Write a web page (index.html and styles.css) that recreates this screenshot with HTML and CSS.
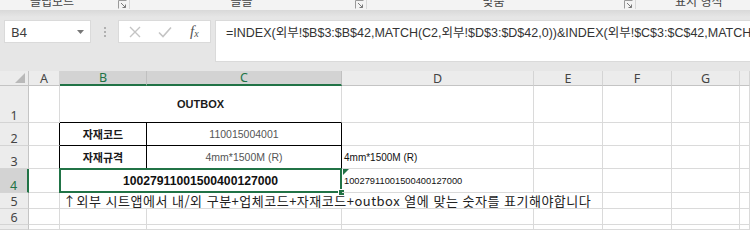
FILE: index.html
```html
<!DOCTYPE html>
<html lang="ko">
<head>
<meta charset="utf-8">
<title>OUTBOX</title>
<link rel="stylesheet" href="styles.css">
</head>
<body>
<div class="ribbon">
  <div class="grp g-clip"><span class="glabel">클립보드</span><span class="launch"><svg width="9" height="9" viewBox="0 0 9 9"><path d="M0.5 8.5V0.5H8.5" fill="none" stroke="#9a9a9a"/><path d="M3 3L7.5 7.5M4.5 7.5H7.5V4.5" fill="none" stroke="#7a7a7a"/></svg></span></div>
  <div class="grp g-font"><span class="glabel">글꼴</span><span class="launch"><svg width="9" height="9" viewBox="0 0 9 9"><path d="M0.5 8.5V0.5H8.5" fill="none" stroke="#9a9a9a"/><path d="M3 3L7.5 7.5M4.5 7.5H7.5V4.5" fill="none" stroke="#7a7a7a"/></svg></span></div>
  <div class="grp g-align"><span class="glabel">맞춤</span><span class="launch"><svg width="9" height="9" viewBox="0 0 9 9"><path d="M0.5 8.5V0.5H8.5" fill="none" stroke="#9a9a9a"/><path d="M3 3L7.5 7.5M4.5 7.5H7.5V4.5" fill="none" stroke="#7a7a7a"/></svg></span></div>
  <div class="grp g-num"><span class="glabel">표시 형식</span></div>
</div>
<div class="fbar">
  <div class="namebox"><span class="nb-text">B4</span><svg class="caret" width="7" height="4" viewBox="0 0 7 4"><path d="M0 0H7L3.5 4Z" fill="#777"/></svg></div>
  <div class="dots"><i></i><i></i><i></i></div>
  <div class="fxbox">
    <svg width="12" height="12" viewBox="0 0 12 12"><path d="M1 1L11 11M11 1L1 11" stroke="#c4c4c4" stroke-width="1.4" fill="none"/></svg>
    <svg width="14" height="12" viewBox="0 0 14 12"><path d="M1 6.5L5 10.5L13 1.5" stroke="#c4c4c4" stroke-width="1.6" fill="none"/></svg>
    <span class="fx">f<sub>x</sub></span>
  </div>
  <div class="formula">=INDEX(외부!$B$3:$B$42,MATCH(C2,외부!$D$3:$D$42,0))&amp;INDEX(외부!$C$3:$C$42,MATCH(C3,외부!$E$3:$E$42,0))</div>
</div>
<div class="sheet">
  <!-- header row -->
  <div class="corner"><svg width="10" height="10" viewBox="0 0 10 10"><path d="M10 0V10H0Z" fill="#b9b9b9"/></svg></div>
  <div class="ch">A</div>
  <div class="ch sel-h">B</div>
  <div class="ch sel-h">C</div>
  <div class="ch">D</div>
  <div class="ch">E</div>
  <div class="ch">F</div>
  <div class="ch">G</div>
  <div class="ch"></div>

  <!-- row 1 -->
  <div class="rh">1</div>
  <div class="c"></div>
  <div class="c span2 title bb">OUTBOX</div>
  <div class="c"></div>
  <div class="c"></div>
  <div class="c"></div>
  <div class="c"></div>
  <div class="c"></div>

  <!-- row 2 -->
  <div class="rh">2</div>
  <div class="c br"></div>
  <div class="c br bb label">자재코드</div>
  <div class="c br bb val">110015004001</div>
  <div class="c"></div>
  <div class="c"></div>
  <div class="c"></div>
  <div class="c"></div>
  <div class="c"></div>

  <!-- row 3 -->
  <div class="rh">3</div>
  <div class="c br"></div>
  <div class="c br bb label">자재규격</div>
  <div class="c br bb val">4mm*1500M (R)</div>
  <div class="c small">4mm*1500M (R)</div>
  <div class="c"></div>
  <div class="c"></div>
  <div class="c"></div>
  <div class="c"></div>

  <!-- row 4 -->
  <div class="rh sel-r">4</div>
  <div class="c br"></div>
  <div class="c span2 br bb code">10027911001500400127000<span class="selbox"></span><span class="handle"></span></div>
  <div class="c small num">10027911001500400127000<span class="flag"></span></div>
  <div class="c"></div>
  <div class="c"></div>
  <div class="c"></div>
  <div class="c"></div>

  <!-- row 5 -->
  <div class="rh">5</div>
  <div class="c"></div>
  <div class="c span4 note">↑외부 시트앱에서 내/외 구분+업체코드+자재코드+outbox 열에 맞는 숫자를 표기해야합니다</div>
  <div class="c"></div>
  <div class="c"></div>
  <div class="c"></div>

  <!-- row 6 -->
  <div class="rh">6</div>
  <div class="c"></div>
  <div class="c"></div>
  <div class="c"></div>
  <div class="c"></div>
  <div class="c"></div>
  <div class="c"></div>
  <div class="c"></div>
  <div class="c"></div>

  <!-- row 7 (sliver at the bottom edge) -->
  <div class="rh"></div>
  <div class="c"></div>
  <div class="c"></div>
  <div class="c"></div>
  <div class="c"></div>
  <div class="c"></div>
  <div class="c"></div>
  <div class="c"></div>
  <div class="c"></div>
</div>
</body>
</html>
```
FILE: styles.css
```css
html, body {
  margin: 0;
  padding: 0;
}
body {
  width: 750px;
  height: 230px;
  overflow: hidden;
  background: #e6e6e6;
  font-family: "Liberation Sans", "Noto Sans CJK KR", sans-serif;
  color: #000;
}

/* ribbon remains */
.ribbon {
  height: 10px;
  display: flex;
  background: #f3f3f3;
  overflow: hidden;
}
.grp {
  display: flex;
  align-items: flex-start;
  border-right: 1px solid #d8d8d8;
  height: 9px;
}
.g-clip { width: 129px; }
.g-font { width: 236px; }
.g-align { width: 268px; }
.g-num { flex: 1; border-right: none; }
.glabel {
  flex: 1;
  text-align: center;
  font-family: "Noto Sans CJK KR", sans-serif;
  font-size: 12px;
  line-height: 12px;
  margin-top: -5px;
  color: #444;
}
.g-clip .glabel { padding-right: 14px; }
.g-font .glabel { padding-right: 2px; }
.g-align .glabel { padding-right: 4px; }
.g-num .glabel { text-align: left; padding-left: 39px; }
.launch {
  width: 9px;
  height: 9px;
  margin-right: 2px;
  display: flex;
}

/* formula bar */
.fbar {
  height: 61px;
  box-sizing: border-box;
  padding: 10px 0 9px 4px;
  display: flex;
  align-items: flex-start;
  background: linear-gradient(#d9d9d9 0, #e6e6e6 7px);
}
.namebox {
  width: 87px;
  height: 23px;
  box-sizing: border-box;
  background: #fff;
  border: 1px solid #dadada;
  display: flex;
  align-items: center;
  justify-content: space-between;
  padding: 0 6px 0 6px;
}
.nb-text {
  font-family: "Noto Sans", sans-serif;
  font-size: 13px;
  color: #3c3c3c;
}
.dots {
  width: 27px;
  height: 23px;
  display: flex;
  flex-direction: column;
  align-items: center;
  justify-content: center;
  gap: 2px;
}
.dots i {
  display: block;
  width: 2px;
  height: 2px;
  background: #b0b0b0;
}
.fxbox {
  width: 93px;
  height: 23px;
  box-sizing: border-box;
  background: #fff;
  border: 1px solid #dadada;
  display: flex;
  align-items: center;
  padding-left: 10px;
  gap: 17px;
}
.fx {
  font-family: "Liberation Serif", serif;
  font-style: italic;
  font-size: 15px;
  color: #555;
  margin-left: 1px;
}
.fx sub {
  font-size: 10px;
  vertical-align: -1px;
}
.formula {
  margin-left: 4px;
  flex: 1;
  height: 42px;
  box-sizing: border-box;
  background: #fff;
  border: 1px solid #dadada;
  border-right: none;
  padding: 4px 0 0 10px;
  font-size: 12.5px;
  line-height: 16px;
  color: #333;
  white-space: nowrap;
  overflow: hidden;
}

/* sheet grid */
.sheet {
  display: grid;
  grid-template-columns: 29px 31px 87px 195px 192px 69px 69px 68px 10px;
  grid-template-rows: 15px 37px 23px 23px 24px 16px 16px 5px;
  background: #fff;
  overflow: hidden;
}
.corner, .ch, .rh {
  background: #ececec;
  color: #444;
  font-family: "Noto Sans", sans-serif;
  font-size: 12.5px;
  box-sizing: border-box;
  overflow: hidden;
}
.corner {
  border-right: 1px solid #c4c4c4;
  border-bottom: 1px solid #c4c4c4;
  display: flex;
  align-items: flex-end;
  justify-content: flex-end;
  padding: 0 3px 2px 0;
}
.ch {
  border-right: 1px solid #d4d4d4;
  border-bottom: 1px solid #c4c4c4;
  display: flex;
  align-items: center;
  justify-content: center;
  line-height: 13px;
}
.ch.sel-h {
  background: #d3d3d3;
  color: #217346;
  border-right-color: #c0c0c0;
  border-bottom: 2px solid #217346;
}
.rh {
  border-right: 1px solid #c4c4c4;
  border-bottom: 1px solid #d4d4d4;
  display: flex;
  align-items: flex-end;
  justify-content: center;
  line-height: 13px;
}
.rh.sel-r {
  background: #d3d3d3;
  color: #217346;
  border-right: 2px solid #217346;
}
.c {
  box-sizing: border-box;
  border-right: 1px solid #dadada;
  border-bottom: 1px solid #dadada;
  display: flex;
  align-items: center;
  justify-content: center;
  font-size: 10.5px;
  white-space: nowrap;
  min-width: 0;
}
.c.br { border-right-color: #000; }
.c.bb { border-bottom-color: #000; }
.span2 { grid-column: span 2; }
.span4 { grid-column: span 4; }
.title {
  font-weight: bold;
  font-size: 11px;
  color: #1a1a1a;
}
.label {
  font-family: "Noto Sans CJK KR", sans-serif;
  font-weight: bold;
  font-size: 11px;
  color: #1a1a1a;
}
.val {
  color: #555;
}
.code {
  position: relative;
  font-weight: bold;
  font-size: 12.2px;
  color: #111;
}
.small {
  justify-content: flex-start;
  padding-left: 2px;
  font-size: 10px;
  color: #111;
}
.num {
  position: relative;
  font-size: 9.3px;
}
.note {
  justify-content: flex-start;
  padding-left: 3px;
  font-family: "Noto Sans CJK KR", sans-serif;
  font-size: 13px;
  line-height: 15px;
  letter-spacing: 0.5px;
  color: #222;
  overflow: visible;
}
.selbox {
  position: absolute;
  left: -1px;
  top: -1px;
  right: -1px;
  bottom: -1px;
  border: 2px solid #217346;
  pointer-events: none;
}
.handle {
  position: absolute;
  right: -4px;
  bottom: -4px;
  width: 5px;
  height: 5px;
  background: #217346;
  border: 1px solid #fff;
}
.flag {
  position: absolute;
  left: 1px;
  top: 0;
  width: 0;
  height: 0;
  border-top: 6px solid #217346;
  border-right: 6px solid transparent;
}
```
